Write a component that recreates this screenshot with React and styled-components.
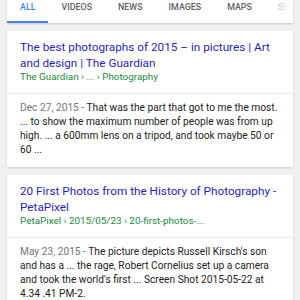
import React from "react";
import styled, { createGlobalStyle } from "styled-components";

const Global = createGlobalStyle`
  html, body { margin: 0; padding: 0; background: #f1f1f1; }
  body { font-family: Roboto, "Liberation Sans", Arial, sans-serif; width: 300px; height: 300px; overflow: hidden; }
`;

const Page = styled.div`
  padding: 0 7px;
  display: flex;
  flex-direction: column;
  gap: 8px;
`;

const TabBar = styled.div`
  position: relative;
  background: #fff;
  height: 23px;
  display: flex;
  overflow: hidden;
  box-shadow: 0 1px 2px rgba(0,0,0,0.18);
  &::after {
    content: "";
    position: absolute;
    right: 0; top: 0; bottom: 0;
    width: 26px;
    background: linear-gradient(to right, rgba(255,255,255,0.3), #fff 90%);
  }
`;

const Tab = styled.div`
  flex: none;
  padding: 0 13px;
  height: 23px;
  box-sizing: border-box;
  font-size: 8.9px;
  line-height: 14px;
  font-weight: 500;
  color: ${p => (p.$active ? "#4285f4" : "#616161")};
  border-bottom: 2px solid ${p => (p.$active ? "#4285f4" : "transparent")};
`;

const Card = styled.div`
  background: #fff;
  box-shadow: 0 1px 2px rgba(0,0,0,0.15);
`;

const Head = styled.div`
  padding: 8px 8px 10px 13px;
  border-bottom: 1px solid #ebebeb;
`;

const Title = styled.div`
  font-size: 11.75px;
  line-height: 16px;
  color: #2a1ec0;
`;

const Crumb = styled.div`
  font-size: 9.9px;
  line-height: 12px;
  color: #1b8a3a;
  white-space: nowrap;
`;

const Snippet = styled.div`
  padding: 7px 13px 10px;
  font-size: 10.2px;
  line-height: 14px;
  color: #222;
`;

const DateText = styled.span`
  color: #757575;
`;

const results = [
  {
    title: "The best photographs of 2015 – in pictures | Art and design | The Guardian",
    crumb: "The Guardian › ... › Photography",
    date: "Dec 27, 2015",
    text: "That was the part that got to me the most. ... to show the maximum number of people was from up high. ... a 600mm lens on a tripod, and took maybe 50 or 60 ...",
  },
  {
    title: "20 First Photos from the History of Photography - PetaPixel",
    crumb: "PetaPixel › 2015/05/23 › 20-first-photos-...",
    date: "May 23, 2015",
    text: "The picture depicts Russell Kirsch's son and has a ... the rage, Robert Cornelius set up a camera and took the world's first ... Screen Shot 2015-05-22 at 4.34 .41 PM-2.",
  },
];

const tabs = ["ALL", "VIDEOS", "NEWS", "IMAGES", "MAPS", "SHOPPING"];

export default function App() {
  return (
    <>
      <Global />
      <Page>
        <TabBar>
          {tabs.map((t, i) => (
            <Tab key={t} $active={i === 0}>{t}</Tab>
          ))}
        </TabBar>
        {results.map(r => (
          <Card key={r.title}>
            <Head>
              <Title>{r.title}</Title>
              <Crumb>{r.crumb}</Crumb>
            </Head>
            <Snippet>
              <DateText>{r.date} - </DateText>
              {r.text}
            </Snippet>
          </Card>
        ))}
      </Page>
    </>
  );
}
